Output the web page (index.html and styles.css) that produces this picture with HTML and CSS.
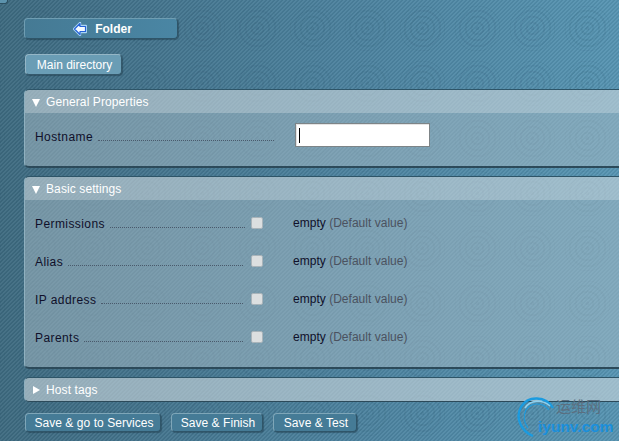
FILE: index.html
```html
<!DOCTYPE html>
<html lang="en">
<head>
  <meta charset="UTF-8">
  <meta name="viewport" content="width=device-width, initial-scale=1.0">
  <title>Host properties</title>
  <link rel="stylesheet" href="styles.css">
</head>
<body>
  <div class="corner"></div>
  <div class="page">
    <a class="btn btn-folder" href="#">
      <svg class="arrow" width="14" height="14" viewBox="0 0 14 14">
        <path d="M7 1 L1 7 L7 13 V10 H13 V4 H7 Z" fill="#fff" stroke="#a9d4f5" stroke-width="2.4" stroke-linejoin="round"/>
        <path d="M7 1.5 L1.5 7 L7 12.5 V9.5 H12.5 V4.5 H7 Z" fill="#f4faff" stroke="#2463d6" stroke-width="1.2" stroke-linejoin="round"/>
      </svg>
      Folder
    </a>
    <a class="btn btn-main" href="#">Main directory</a>

    <section class="box">
      <h2 class="box-head"><span class="tri-down"></span>General Properties</h2>
      <div class="box-body body-host">
        <div class="row row-host">
          <span class="label">Hostname <i class="dots"></i></span>
          <div class="host-input"><span class="caret"></span></div>
        </div>
      </div>
    </section>

    <section class="box">
      <h2 class="box-head"><span class="tri-down"></span>Basic settings</h2>
      <div class="box-body body-basic">
        <div class="row">
          <span class="label">Permissions <i class="dots"></i></span>
          <span class="check"></span>
          <span class="value">empty <em>(Default value)</em></span>
        </div>
        <div class="row">
          <span class="label">Alias <i class="dots"></i></span>
          <span class="check"></span>
          <span class="value">empty <em>(Default value)</em></span>
        </div>
        <div class="row">
          <span class="label">IP address <i class="dots"></i></span>
          <span class="check"></span>
          <span class="value">empty <em>(Default value)</em></span>
        </div>
        <div class="row">
          <span class="label">Parents <i class="dots"></i></span>
          <span class="check"></span>
          <span class="value">empty <em>(Default value)</em></span>
        </div>
      </div>
    </section>

    <section class="box box-closed">
      <h2 class="box-head"><span class="tri-right"></span>Host tags</h2>
    </section>

    <div class="actions">
      <a class="btn btn-save save-services" href="#">Save &amp; go to Services</a>
      <a class="btn btn-save save-finish" href="#">Save &amp; Finish</a>
      <a class="btn btn-save save-test" href="#">Save &amp; Test</a>
    </div>
  </div>

  <!-- watermark over the bottom right corner -->
  <div class="watermark">
    <svg class="wm-logo" width="40" height="44" viewBox="0 0 40 44" fill="none">
      <path d="M37 13 C30 1 12 0 5 12 C-1 23 5 36 17 41" stroke="#1a9be0" stroke-width="2.4"/>
      <path d="M34 11 C26 4 14 5 9 13" stroke="#8fd0ee" stroke-width="1.6"/>
      <path d="M33 15 C27 7 15 7 10 15 C7 21 8 28 12 33" stroke="#1a9be0" stroke-width="1.2"/>
    </svg>
    <span class="wm-cn">运维网</span>
    <span class="wm-en">iyunv.com</span>
  </div>
</body>
</html>
```

FILE: styles.css
```css
* {
  margin: 0;
  padding: 0;
  box-sizing: border-box;
}
html, body {
  height: 100%;
}
body {
  position: relative;
  overflow: hidden;
  font-family: "Liberation Sans", Arial, sans-serif;
  font-size: 12px;
  color: #10102a;
  background-color: #4a7f9b;
  /* hatching, rings tile, then the left to right fade */
  background-image:
    repeating-linear-gradient(135deg, rgba(255,255,255,.05) 0 1.414px, rgba(0,0,0,.05) 1.414px 2.828px),
    radial-gradient(circle, rgba(30,70,95,.11) 0 2px, transparent 2px 5px, rgba(30,70,95,.09) 5px 7px, transparent 7px 11px, rgba(30,70,95,.09) 11px 13px, transparent 13px 17px, rgba(30,70,95,.08) 17px 19px, transparent 19px 22px, rgba(30,70,95,.06) 22px 23px, transparent 23px),
    linear-gradient(90deg, #3d6a80 0%, #4a7f9b 50%, #5694b2 100%);
  background-size: auto, 55px 55px, auto;
  background-position: 0 0, 10px 1px, 0 0;
}
.corner {
  position: absolute;
  left: 0;
  top: 0;
  width: 8px;
  height: 4px;
  background: #5c93ad;
  border-right: 1px solid #2c4f60;
  border-bottom: 1px solid #2c4f60;
  border-bottom-right-radius: 3px;
}
.page {
  display: flex;
  flex-direction: column;
  align-items: flex-start;
  padding: 18px 0 0 24px;
  width: 100%;
}
.btn {
  display: flex;
  align-items: center;
  justify-content: center;
  color: #fff;
  text-decoration: none;
  border: 1px solid #94b6c6;
  border-right-color: #35596c;
  border-bottom-color: #35596c;
  border-radius: 4px;
  box-shadow: 1px 1px 1px rgba(20,45,60,.4);
}
.btn-folder {
  width: 154px;
  height: 21px;
  gap: 8px;
  padding-left: 3px;
  font-weight: bold;
  background: linear-gradient(90deg, #457a94, #4a86a4);
  border-color: #6f9db2 #2f5569 #2f5569 #6f9db2;
}
.btn-main {
  margin: 15px 0 0 1px;
  width: 97px;
  height: 21px;
  padding-left: 2px;
  background: #6a9db5;
}
.box {
  width: 100%;
  margin-top: 8px;
  border-radius: 5px 0 0 5px;
  border-top: 1px solid #2e5568;
  border-left: 1px solid #8fb0bf;
  border-bottom: 2px solid #2c4a5a;
  background: rgba(170,190,200,.5);
  overflow: hidden;
}
.btn-main + .box {
  margin-top: 14px;
}
.box-closed {
  border-bottom-width: 1px;
}
.box-head {
  display: flex;
  align-items: center;
  height: 23px;
  padding-left: 6px;
  font-size: 12px;
  font-weight: normal;
  letter-spacing: .1px;
  color: #fff;
  background: rgba(255,255,255,.24);
}
.tri-down {
  width: 0;
  height: 0;
  margin: 2px 6px 0 1px;
  border-left: 4px solid transparent;
  border-right: 4px solid transparent;
  border-top: 8px solid #fff;
}
.tri-right {
  width: 0;
  height: 0;
  margin: 0 6px 0 2px;
  border-top: 4.5px solid transparent;
  border-bottom: 4.5px solid transparent;
  border-left: 7px solid #fff;
}
.box-body {
  padding-left: 10px;
}
.body-host {
  height: 53px;
  padding-top: 10px;
}
.body-basic {
  height: 167px;
  padding-top: 4px;
}
.row {
  display: flex;
  align-items: center;
  height: 38px;
}
.row-host {
  height: 24px;
}
.label {
  display: flex;
  align-items: baseline;
  gap: 5px;
  width: 208px;
  padding-top: 2px;
  letter-spacing: .42px;
}
.row:first-child .label {
  width: 210px;
}
.row-host .label, .row-host:first-child .label {
  width: 239px;
  padding-top: 3px;
}
.dots {
  flex: 1;
  border-bottom: 1px dotted #4a5a6c;
}
.check {
  width: 12px;
  height: 12px;
  margin-left: 8px;
  background: #dcdfe0;
  border: 1px solid #a9b4ba;
  border-radius: 2px;
}
.row:first-child .check {
  margin-left: 6px;
}
.value {
  margin-left: 30px;
  letter-spacing: .02px;
}
.value em {
  font-style: normal;
  color: #4b5260;
}
.host-input {
  display: flex;
  align-items: center;
  width: 135px;
  height: 24px;
  margin-left: 21px;
  padding-left: 3px;
  background: #fff;
  border: 1px solid #7d8487;
  box-shadow: inset 1px 1px 0 #e4e4e4;
}
.caret {
  width: 1px;
  height: 15px;
  background: #000;
}
.actions {
  display: flex;
  gap: 10px;
  margin: 11px 0 0 1px;
}
.btn-save {
  height: 19px;
  padding: 1px 0 0 2px;
  letter-spacing: .05px;
  background: #457b96;
  border-color: #7ea6b8 #2f5569 #2f5569 #7ea6b8;
}
.save-services {
  width: 136px;
}
.save-finish {
  width: 92px;
}
.save-test {
  width: 84px;
}
.watermark {
  position: absolute;
  left: 516px;
  top: 393px;
  width: 103px;
  height: 48px;
}
.wm-logo {
  position: absolute;
  left: 0;
  top: 2px;
}
.wm-cn {
  position: absolute;
  left: 40px;
  top: 5px;
  font-family: "Noto Sans CJK SC", sans-serif;
  font-size: 15px;
  line-height: 16px;
  color: #5b6f80;
}
.wm-en {
  position: absolute;
  left: 22px;
  top: 25px;
  font-size: 15.5px;
  font-weight: bold;
  line-height: 18px;
  color: #1a8fdc;
}
```
